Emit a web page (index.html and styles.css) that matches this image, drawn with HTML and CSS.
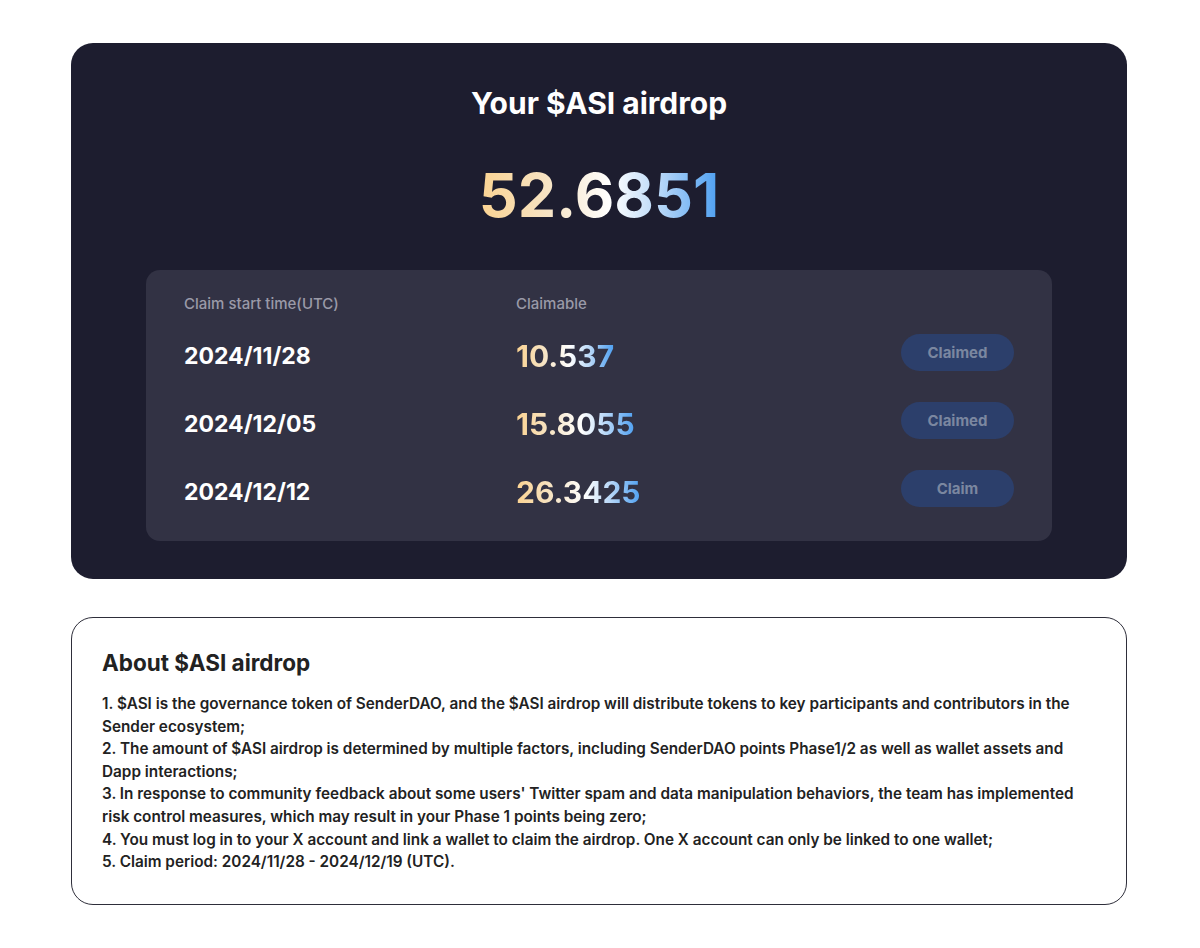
FILE: index.html
```html
<!DOCTYPE html>
<html>
<head>
<meta charset="utf-8">
<link rel="stylesheet" href="styles.css">
</head>
<body>
<main class="page">
  <section class="airdrop">
    <h1 class="title">Your $ASI airdrop</h1>
    <div class="total"><span class="grad">52.6851</span></div>
    <div class="panel">
      <div class="row head">
        <div>Claim start time(UTC)</div>
        <div>Claimable</div>
        <div></div>
      </div>
      <div class="row">
        <div class="date">2024/11/28</div>
        <div class="amount"><span class="grad">10.537</span></div>
        <div><button class="btn">Claimed</button></div>
      </div>
      <div class="row">
        <div class="date">2024/12/05</div>
        <div class="amount"><span class="grad">15.8055</span></div>
        <div><button class="btn">Claimed</button></div>
      </div>
      <div class="row">
        <div class="date">2024/12/12</div>
        <div class="amount"><span class="grad">26.3425</span></div>
        <div><button class="btn">Claim</button></div>
      </div>
    </div>
  </section>
  <section class="about">
    <h2 class="about-title">About $ASI airdrop</h2>
    <div class="about-text">
      <p>1. $ASI is the governance token of SenderDAO, and the $ASI airdrop will distribute tokens to key participants and contributors in the Sender ecosystem;</p>
      <p>2. The amount of $ASI airdrop is determined by multiple factors, including SenderDAO points Phase1/2 as well as wallet assets and Dapp interactions;</p>
      <p>3. In response to community feedback about some users' Twitter spam and data manipulation behaviors, the team has implemented risk control measures, which may result in your Phase 1 points being zero;</p>
      <p>4. You must log in to your X account and link a wallet to claim the airdrop. One X account can only be linked to one wallet;</p>
      <p>5. Claim period: 2024/11/28 - 2024/12/19 (UTC).</p>
    </div>
  </section>
</main>
</body>
</html>
```
FILE: styles.css
```css
* { box-sizing: border-box; }
html, body {
  margin: 0;
  padding: 0;
  background: #ffffff;
  font-family: Inter, "Noto Sans", "Liberation Sans", sans-serif;
}
.page {
  width: 1056px;
  margin-left: 71px;
  padding-top: 43px;
  display: flex;
  flex-direction: column;
  gap: 38px;
}
.airdrop {
  background: #1d1d2f;
  border-radius: 22px;
  padding: 40px 75px 38px;
  display: flex;
  flex-direction: column;
  align-items: center;
}
.title {
  margin: 0;
  color: #ffffff;
  font-size: 30px;
  line-height: 40px;
  font-weight: 700;
}
.total {
  margin-top: 32px;
  font-size: 61px;
  line-height: 80px;
  font-weight: 700;
}
.grad {
  display: inline-block;
  background: linear-gradient(90deg, #fbd392 0%, #f6e4c6 30%, #ffffff 55%, #b9d8f8 75%, #4d9ff1 100%);
  -webkit-background-clip: text;
  background-clip: text;
  color: transparent;
}
.panel {
  margin-top: 35px;
  width: 100%;
  background: #323244;
  border-radius: 14px;
  padding: 24px 38px 15px;
}
.row {
  display: grid;
  grid-template-columns: 332px 1fr auto;
  align-items: center;
  height: 68px;
}
.row.head {
  height: 20px;
  margin-bottom: 8px;
  color: #9a9aa8;
  font-size: 15px;
  line-height: 20px;
  font-weight: 500;
}
.date {
  color: #ffffff;
  font-size: 23px;
  font-weight: 700;
}
.amount {
  font-size: 30px;
  font-weight: 700;
}
.btn {
  width: 113px;
  height: 37px;
  margin-bottom: 8px;
  border: none;
  border-radius: 19px;
  background: #2c3f6b;
  color: #7b87a0;
  font-family: inherit;
  font-size: 15px;
  font-weight: 700;
  display: block;
}
.about {
  border: 1px solid #2e2e3a;
  border-radius: 22px;
  padding: 29px 30px 30px;
}
.about-title {
  margin: 0;
  color: #222222;
  font-size: 22.5px;
  line-height: 32px;
  font-weight: 700;
}
.about-text {
  margin-top: 14px;
  color: #222222;
  font-size: 15.3px;
  line-height: 22.6px;
  font-weight: 600;
}
.about-text p { margin: 0; }
```
